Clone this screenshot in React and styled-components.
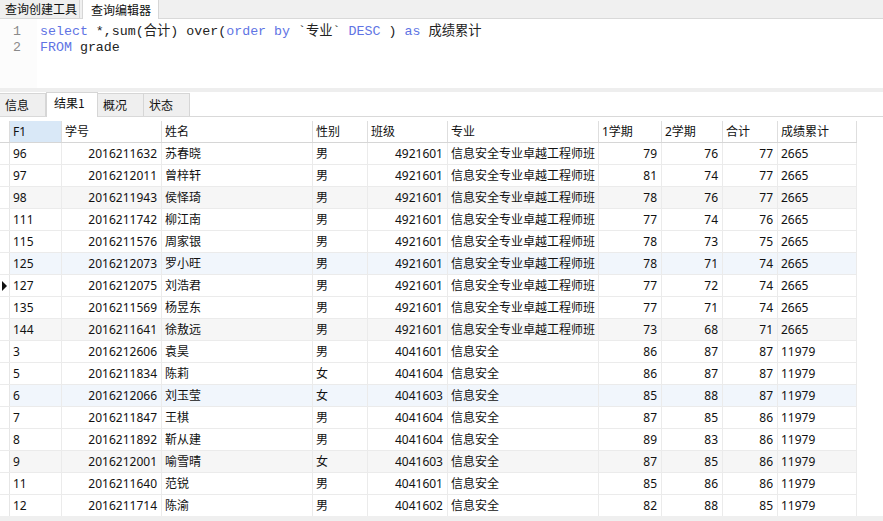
import styled, { createGlobalStyle } from 'styled-components';

const GlobalStyle = createGlobalStyle`
  html, body { margin: 0; padding: 0; background: #fff; }
  body { font-family: "Noto Sans", "Noto Sans CJK SC", sans-serif; font-size: 12px; color: #111; }
`;

const columns = [
  { key: 'f1', title: 'F1', width: 52, align: 'left' },
  { key: 'no', title: '学号', width: 100, align: 'right' },
  { key: 'name', title: '姓名', width: 151, align: 'left' },
  { key: 'sex', title: '性别', width: 55, align: 'left' },
  { key: 'cls', title: '班级', width: 80, align: 'right' },
  { key: 'major', title: '专业', width: 151, align: 'left' },
  { key: 't1', title: '1学期', width: 63, align: 'right' },
  { key: 't2', title: '2学期', width: 61, align: 'right' },
  { key: 'sum', title: '合计', width: 55, align: 'right' },
  { key: 'acc', title: '成绩累计', width: 79, align: 'left' },
];

const A = '信息安全专业卓越工程师班';
const B = '信息安全';
const rows = [
  ['96', '2016211632', '苏春晓', '男', '4921601', A, '79', '76', '77', '2665'],
  ['97', '2016212011', '曾梓轩', '男', '4921601', A, '81', '74', '77', '2665'],
  ['98', '2016211943', '侯怿琦', '男', '4921601', A, '78', '76', '77', '2665'],
  ['111', '2016211742', '柳江南', '男', '4921601', A, '77', '74', '76', '2665'],
  ['115', '2016211576', '周家银', '男', '4921601', A, '78', '73', '75', '2665'],
  ['125', '2016212073', '罗小旺', '男', '4921601', A, '78', '71', '74', '2665'],
  ['127', '2016212075', '刘浩君', '男', '4921601', A, '77', '72', '74', '2665'],
  ['135', '2016211569', '杨昱东', '男', '4921601', A, '77', '71', '74', '2665'],
  ['144', '2016211641', '徐敖远', '男', '4921601', A, '73', '68', '71', '2665'],
  ['3', '2016212606', '袁昊', '男', '4041601', B, '86', '87', '87', '11979'],
  ['5', '2016211834', '陈莉', '女', '4041604', B, '86', '87', '87', '11979'],
  ['6', '2016212066', '刘玉莹', '女', '4041603', B, '85', '88', '87', '11979'],
  ['7', '2016211847', '王棋', '男', '4041604', B, '87', '85', '86', '11979'],
  ['8', '2016211892', '靳从建', '男', '4041604', B, '89', '83', '86', '11979'],
  ['9', '2016212001', '喻雪晴', '女', '4041603', B, '87', '85', '86', '11979'],
  ['11', '2016211640', '范锐', '男', '4041601', B, '85', '86', '86', '11979'],
  ['12', '2016211714', '陈渝', '男', '4041602', B, '82', '88', '85', '11979'],
];

const gridTemplate = `10px ${columns.map(c => c.width + 'px').join(' ')}`;

function App() {
  return (
    <>
      <GlobalStyle />
      <Window>
        <TopTabs>
          <TopTab>查询创建工具</TopTab>
          <TopTab $active>查询编辑器</TopTab>
        </TopTabs>

        <Editor>
          <Gutter>
            <LineNo>1</LineNo>
            <LineNo>2</LineNo>
          </Gutter>
          <Code>
            <CodeLine>
              <Kw>select</Kw> *,sum(合计) over(<Kw>order by</Kw> `专业` <Kw>DESC</Kw> ) <Kw>as</Kw> 成绩累计
            </CodeLine>
            <CodeLine>
              <Kw>FROM</Kw> grade
            </CodeLine>
          </Code>
        </Editor>

        <Splitter />

        <ResultTabs>
          <ResultTab>信息</ResultTab>
          <ResultTab $active>结果1</ResultTab>
          <ResultTab>概况</ResultTab>
          <ResultTab>状态</ResultTab>
        </ResultTabs>

        <GridWrap>
          <Grid>
            <HeaderRow>
              <Indicator $header />
              {columns.map((c, i) => (
                <HeadCell key={c.key} $selected={i === 0}>{c.title}</HeadCell>
              ))}
            </HeaderRow>
            {rows.map((r, ri) => {
              const shade = ri % 3 === 2 ? (ri % 6 === 5 ? 'blue' : 'gray') : 'none';
              return (
                <Row key={ri} $shade={shade}>
                  <Indicator>{ri === 6 && <Arrow />}</Indicator>
                  {r.map((v, ci) => (
                    <Cell key={ci} $align={columns[ci].align}>{v}</Cell>
                  ))}
                </Row>
              );
            })}
          </Grid>
        </GridWrap>
        <HScroll />
      </Window>
    </>
  );
}

export default App;

const Window = styled.div`
  width: 883px;
  height: 521px;
  display: flex;
  flex-direction: column;
  overflow: hidden;
  background: #fff;
`;

const TopTabs = styled.div`
  display: flex;
  height: 19px;
  flex: none;
  background: #f0f0f0;
  border-bottom: 1px solid #d9d9d9;
  box-sizing: border-box;
  font-family: "Noto Sans CJK SC", sans-serif;
  font-size: 12px;
`;

const TopTab = styled.div`
  display: flex;
  align-items: center;
  height: ${p => (p.$active ? '19px' : '18px')};
  padding: ${p => (p.$active ? '0 7px 0 8px' : '0 2px 0 5px')};
  margin-left: ${p => (p.$active ? '2px' : '0')};
  background: ${p => (p.$active ? '#fff' : '#efefef')};
  border-right: 1px solid #d6d6d6;
  border-left: ${p => (p.$active ? '1px solid #d6d6d6' : 'none')};
  box-sizing: border-box;
  line-height: 1;
  color: #111;
`;

const Editor = styled.div`
  display: flex;
  height: 69px;
  flex: none;
  background: #fff;
`;

const Gutter = styled.div`
  width: 37px;
  padding-top: 5px;
  background: #fcfcfc;
  box-sizing: border-box;
`;

const LineNo = styled.div`
  height: 16px;
  line-height: 16px;
  padding-right: 16px;
  text-align: right;
  font-family: "Liberation Mono", monospace;
  font-size: 13.3px;
  color: #8a8a8a;
`;

const Code = styled.div`
  padding: 5px 0 0 3px;
  font-family: "Liberation Mono", "Noto Sans CJK SC", monospace;
  font-size: 13.3px;
  color: #222;
  white-space: pre;
`;

const CodeLine = styled.div`
  height: 16px;
  line-height: 16px;
`;

const Kw = styled.span`
  color: #6074e4;
`;

const Splitter = styled.div`
  height: 4px;
  flex: none;
  background: #eeeeee;
`;

const ResultTabs = styled.div`
  display: flex;
  align-items: flex-end;
  height: 25px;
  flex: none;
  border-bottom: 1px solid #d9d9d9;
  box-sizing: border-box;
  font-family: "Noto Sans CJK SC", sans-serif;
  font-size: 12px;
`;

const ResultTab = styled.div`
  display: flex;
  align-items: ${p => (p.$active ? 'flex-start' : 'center')};
  height: ${p => (p.$active ? '25px' : '23px')};
  padding: ${p => (p.$active ? '3px 0 0 7px' : '0 0 0 5px')};
  width: ${p => (p.$active ? '52px' : '46px')};
  margin-bottom: ${p => (p.$active ? '-1px' : '0')};
  background: ${p => (p.$active ? '#fff' : '#efefef')};
  border: 1px solid #d6d6d6;
  border-bottom: none;
  border-left: ${p => (p.$active ? '1px solid #d6d6d6' : 'none')};
  border-right: 1px solid #d6d6d6;
  box-sizing: border-box;
  line-height: 1.2;
  color: #111;
`;

const GridWrap = styled.div`
  flex: 1;
  padding-top: 4px;
  overflow: hidden;
`;

const Grid = styled.div`
  display: flex;
  flex-direction: column;
  width: 857px;
`;

const HeaderRow = styled.div`
  display: grid;
  grid-template-columns: ${gridTemplate};
  height: 22px;
  border-bottom: 1px solid #d6d6d6;
  box-sizing: border-box;
  background: #fff;
`;

const Row = styled.div`
  display: grid;
  grid-template-columns: ${gridTemplate};
  height: 22px;
  border-bottom: 1px solid #ebebeb;
  box-sizing: border-box;
  background: ${p => (p.$shade === 'blue' ? '#f1f6fc' : p.$shade === 'gray' ? '#f6f6f6' : '#fff')};
`;

const Indicator = styled.div`
  position: relative;
  border-right: 1px solid ${p => (p.$header ? '#dcdcdc' : '#e6e6e6')};
  background: #fff;
  box-sizing: border-box;
`;

const Arrow = styled.span`
  position: absolute;
  left: 2px;
  top: 6px;
  width: 0;
  height: 0;
  border-top: 5px solid transparent;
  border-bottom: 5px solid transparent;
  border-left: 5px solid #111;
`;

const HeadCell = styled.div`
  display: flex;
  align-items: center;
  padding-left: 3px;
  border-right: 1px solid #dedede;
  background: ${p => (p.$selected ? '#d9e8f7' : '#fff')};
  box-sizing: border-box;
  white-space: nowrap;
  overflow: hidden;
  line-height: 1;
`;

const Cell = styled.div`
  display: flex;
  align-items: center;
  justify-content: ${p => (p.$align === 'right' ? 'flex-end' : 'flex-start')};
  padding: 0 4px 0 3px;
  border-right: 1px solid #ebebeb;
  box-sizing: border-box;
  white-space: nowrap;
  overflow: hidden;
  line-height: 1;
`;

const HScroll = styled.div`
  height: 5px;
  flex: none;
  background: #efefef;
`;
